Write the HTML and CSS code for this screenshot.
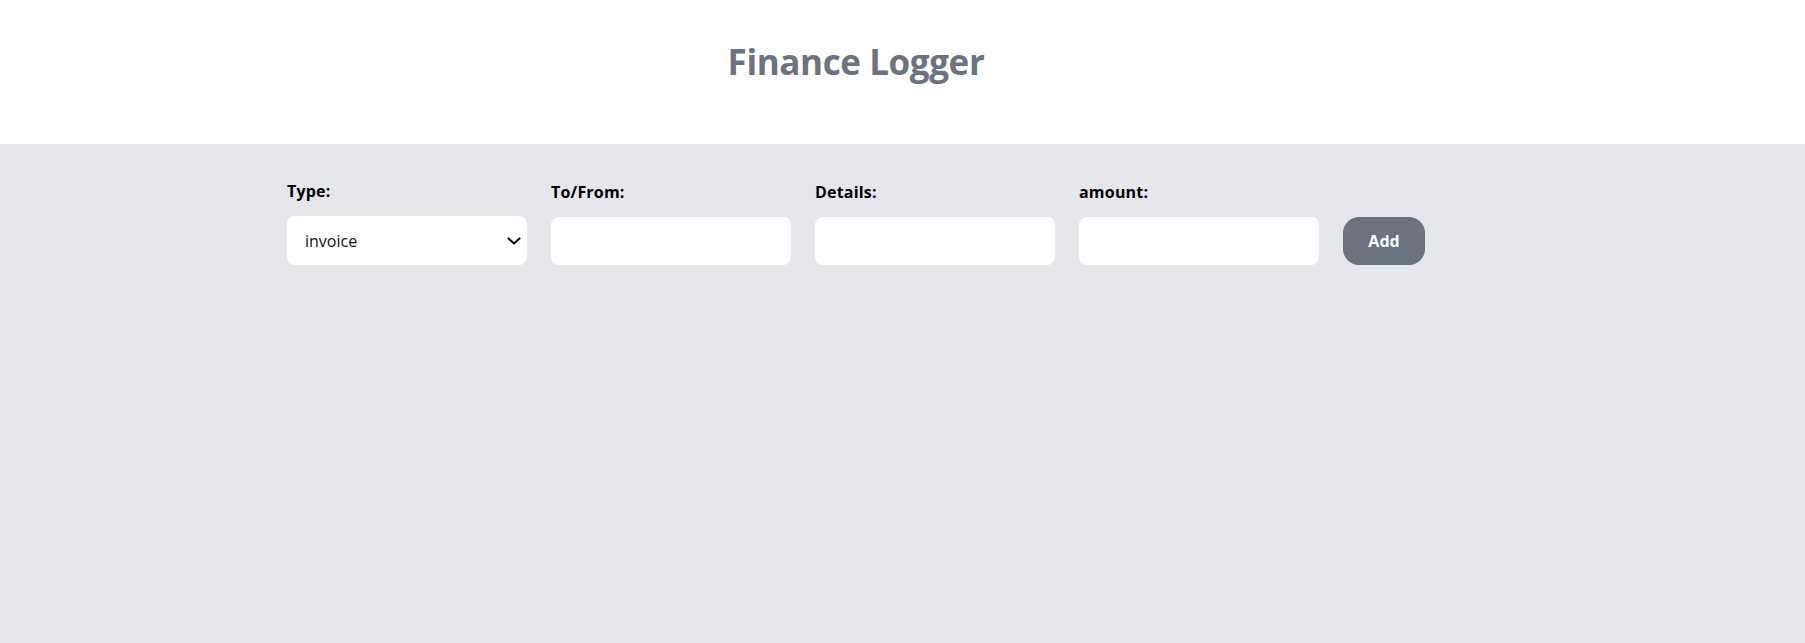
FILE: index.html
```html
<!DOCTYPE html>
<html lang="en">
<head>
<meta charset="utf-8">
<title>Finance Logger</title>
<link rel="stylesheet" href="styles.css">
</head>
<body>
<header class="header">
  <h1 class="title">Finance Logger</h1>
</header>
<main class="main">
  <form class="form">
    <div class="field">
      <label class="label" for="type">Type:</label>
      <div class="select-wrap">
        <select class="select" id="type">
          <option>invoice</option>
          <option>payment</option>
        </select>
        <svg class="chevron" width="14" height="8" viewBox="0 0 14 8" aria-hidden="true"><path d="M1.5 1.5 L7 6.5 L12.5 1.5" fill="none" stroke="#111" stroke-width="2.2" stroke-linecap="round" stroke-linejoin="round"/></svg>
      </div>
    </div>
    <div class="field">
      <label class="label" for="tofrom">To/From:</label>
      <input class="input" type="text" id="tofrom">
    </div>
    <div class="field">
      <label class="label" for="details">Details:</label>
      <input class="input" type="text" id="details">
    </div>
    <div class="field">
      <label class="label" for="amount">amount:</label>
      <input class="input" type="number" id="amount">
    </div>
    <button class="button" type="button">Add</button>
  </form>
</main>
</body>
</html>
```

FILE: styles.css
```css
html, body {
  margin: 0;
  padding: 0;
}

body {
  font-family: "Open Sans", "Noto Sans", sans-serif;
  background: #e5e7eb;
  min-height: 643px;
  color: #000;
}

.header {
  background: #fff;
  height: 144px;
  width: 1712px;
  box-sizing: border-box;
  padding-top: 38px;
  text-align: center;
  box-shadow: 93px 0 0 #fff;
}

.title {
  margin: 0;
  font-size: 35px;
  line-height: 48px;
  font-weight: 700;
  color: #6b7280;
  letter-spacing: -0.4px;
}

.main {
  width: 1712px;
  padding-top: 35px;
}

.form {
  display: flex;
  justify-content: center;
  align-items: flex-end;
  gap: 24px;
}

.field {
  display: flex;
  flex-direction: column;
  width: 240px;
}

.label {
  font-size: 16px;
  line-height: 24px;
  font-weight: 700;
  letter-spacing: 0.2px;
  margin-bottom: 13px;
}

.select-wrap {
  position: relative;
}

.select {
  appearance: none;
  -webkit-appearance: none;
  width: 240px;
  height: 49px;
  border: none;
  border-radius: 8px;
  background: #fff;
  font-family: inherit;
  font-size: 16px;
  color: #111;
  padding: 0 0 0 18px;
  display: block;
}

.chevron {
  position: absolute;
  right: 6px;
  top: 21px;
  pointer-events: none;
}

.input {
  box-sizing: border-box;
  width: 240px;
  height: 48px;
  border: none;
  border-radius: 8px;
  background: #fff;
  font-family: inherit;
  font-size: 16px;
  padding: 0 16px;
  display: block;
}

.button {
  width: 82px;
  height: 48px;
  border: none;
  border-radius: 16px;
  background: #6b7280;
  color: #fff;
  font-family: inherit;
  font-size: 16px;
  font-weight: 700;
  cursor: pointer;
}
```
